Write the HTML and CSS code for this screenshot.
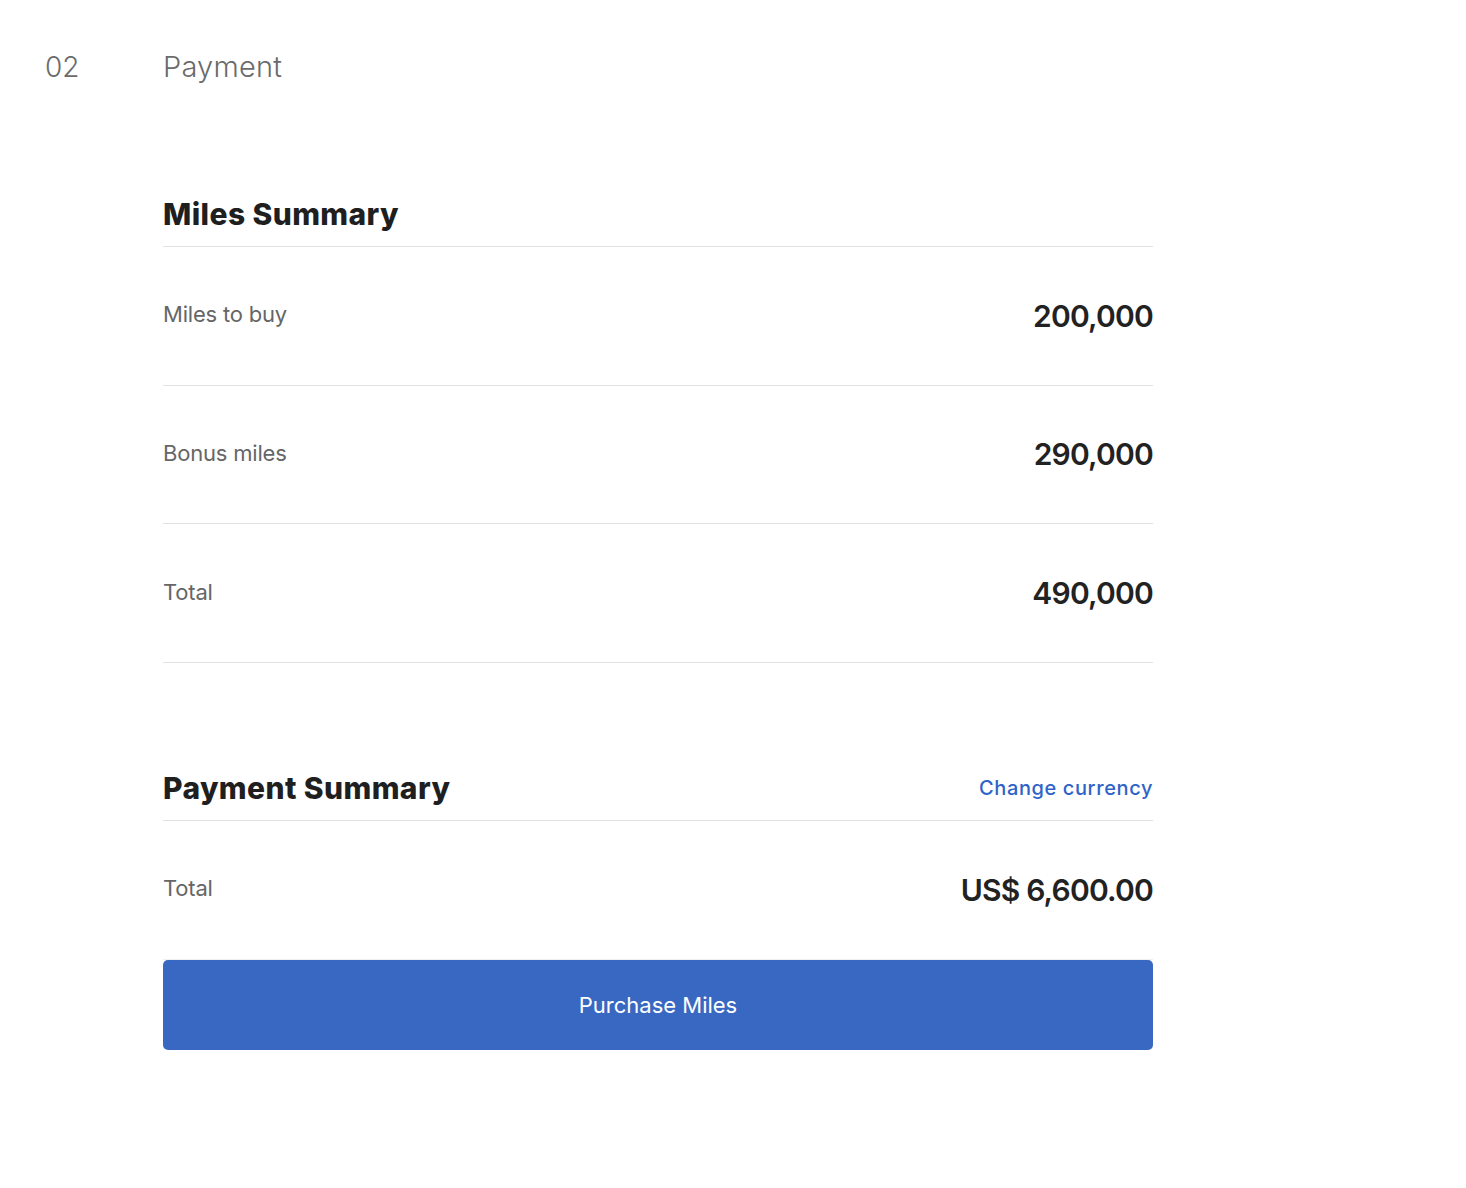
FILE: index.html
```html
<!DOCTYPE html>
<html lang="en">

<head>
    <meta charset="UTF-8">
    <meta name="viewport" content="width=device-width, initial-scale=1.0">
    <title>Payment</title>
    <link rel="stylesheet" href="styles.css">
</head>

<body>
    <div class="step">
        <span class="stepNum">02</span>
        <span class="stepTitle">Payment</span>
    </div>

    <div class="content">
        <div class="section">
            <div class="sectionHead">
                <h2>Miles Summary</h2>
            </div>
            <div class="row">
                <span class="label">Miles to buy</span>
                <span class="value">200,000</span>
            </div>
            <div class="row">
                <span class="label">Bonus miles</span>
                <span class="value">290,000</span>
            </div>
            <div class="row">
                <span class="label">Total</span>
                <span class="value">490,000</span>
            </div>
        </div>

        <div class="section payment">
            <div class="sectionHead">
                <h2>Payment Summary</h2>
                <a href="#" class="link">Change currency</a>
            </div>
            <div class="row last">
                <span class="label">Total</span>
                <span class="value">US$ 6,600.00</span>
            </div>
            <button class="buyBtn">Purchase Miles</button>
        </div>
    </div>
</body>

</html>
```

FILE: styles.css
```css
* {
    box-sizing: border-box;
}

body {
    font-family: Inter, "Liberation Sans", sans-serif;
    background-color: #fff;
    color: #222;
    margin: 0;
}

.step {
    display: flex;
    align-items: center;
    padding: 49px 0 0 45px;
    line-height: 36px;
    color: #6b6b6b;
    font-weight: 300;
}

.stepNum {
    width: 118px;
    font-size: 28px;
}

.stepTitle {
    font-size: 29px;
    letter-spacing: 0.2px;
}

.content {
    width: 990px;
    margin-left: 163px;
    padding-top: 111px;
}

.sectionHead {
    display: flex;
    justify-content: space-between;
    align-items: center;
    padding-bottom: 14px;
    border-bottom: 1px solid #e2e2e2;
}

h2 {
    margin: 0;
    font-size: 30px;
    line-height: 36px;
    font-weight: 800;
    letter-spacing: 0.4px;
    color: #1f1f1f;
}

.link {
    color: #2f63c8;
    font-size: 20px;
    font-weight: 500;
    letter-spacing: 0.6px;
    text-decoration: none;
}

.row {
    display: flex;
    justify-content: space-between;
    align-items: center;
    height: 138.67px;
    border-bottom: 1px solid #e2e2e2;
}

.row.last {
    height: 139px;
    border-bottom-color: #f0f0f0;
}

.label {
    font-size: 22px;
    letter-spacing: -0.2px;
    color: #666;
    margin-top: -3px;
}

.value {
    font-size: 30px;
    font-weight: 600;
    letter-spacing: -0.8px;
    color: #222;
}

.payment {
    margin-top: 107px;
}

.buyBtn {
    display: block;
    width: 100%;
    height: 90px;
    background-color: #3868c2;
    color: #fff;
    font-family: inherit;
    font-size: 22px;
    border: none;
    border-radius: 5px;
    cursor: pointer;
}
```
